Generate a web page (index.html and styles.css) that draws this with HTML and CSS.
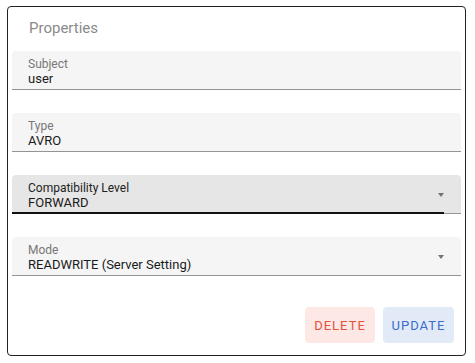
FILE: index.html
```html
<!DOCTYPE html>
<html>
<head>
<meta charset="utf-8">
<title>Properties</title>
<link rel="stylesheet" href="styles.css">
</head>
<body>
<div class="card">
  <div class="card-title">Properties</div>

  <div class="field">
    <div class="field-label">Subject</div>
    <div class="field-value">user</div>
  </div>

  <div class="field">
    <div class="field-label">Type</div>
    <div class="field-value">AVRO</div>
  </div>

  <div class="field select focused">
    <div class="field-label">Compatibility Level</div>
    <div class="field-value">FORWARD</div>
    <span class="arrow"></span>
  </div>

  <div class="field select">
    <div class="field-label">Mode</div>
    <div class="field-value">READWRITE (Server Setting)</div>
    <span class="arrow"></span>
  </div>

  <div class="actions">
    <button class="btn btn-delete">Delete</button>
    <button class="btn btn-update">Update</button>
  </div>
</div>
</body>
</html>
```

FILE: styles.css
```css
body {
margin: 0;
padding: 6px 0 0 7px;
font-family: Roboto, "Liberation Sans", Arial, sans-serif;
background: #ffffff;
}
.card {
width: 449px;
height: 348px;
border: 1px solid #222222;
border-radius: 4px;
padding: 0 4px;
display: flex;
flex-direction: column;
gap: 23px;
}
.card-title {
height: 44px;
margin-bottom: -23px;
padding-left: 17px;
line-height: 43px;
font-size: 15px;
color: #8a8a8a;
}
.field {
position: relative;
height: 39px;
background: #f5f5f5;
border-bottom: 1px solid #949494;
border-radius: 4px 4px 0 0;
padding: 6px 0 0 16px;
box-sizing: border-box;
}
.field.focused {
background: #e6e6e6;
}
.field.focused::after {
content: "";
position: absolute;
left: 0;
right: 17px;
bottom: -1px;
height: 2px;
background: #111111;
}
.field-label {
font-size: 12px;
line-height: 14px;
color: #777777;
}
.field.focused .field-label {
color: #222222;
}
.field-value {
font-size: 13px;
line-height: 16px;
color: #1a1a1a;
}
.arrow {
position: absolute;
right: 17px;
top: 18px;
width: 0;
height: 0;
border-left: 3.5px solid transparent;
border-right: 3.5px solid transparent;
border-top: 4px solid #737373;
}
.actions {
margin-top: auto;
margin-bottom: 12px;
display: flex;
justify-content: flex-end;
gap: 8px;
padding-right: 7px;
}
.btn {
height: 36px;
border: 0;
border-radius: 4px;
font-family: Roboto, "Liberation Sans", Arial, sans-serif;
font-size: 13px;
font-weight: 400;
letter-spacing: 1px;
text-transform: uppercase;
padding: 0 6px;
}
.btn-delete {
width: 70px;
background: #fde8e6;
color: #e8503a;
}
.btn-update {
width: 71px;
background: #e3eaf7;
color: #386ccf;
}
```
